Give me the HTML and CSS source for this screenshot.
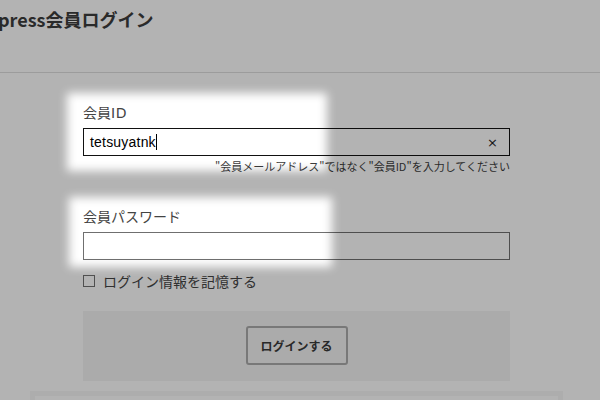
FILE: index.html
```html
<!DOCTYPE html>
<html lang="ja">
<head>
<meta charset="utf-8">
<title>会員ログイン</title>
<link rel="stylesheet" href="styles.css">
</head>
<body>
<header class="header">
  <h1 class="title">press会員ログイン</h1>
</header>
<main class="main">
  <form class="form">
    <label class="label">会員<span class="latin">ID</span></label>
    <div class="field field-focus">
      <span class="value">tetsuyatnk</span><span class="caret"></span>
      <span class="clear">×</span>
    </div>
    <p class="hint">"会員メールアドレス"ではなく"会員ID"を入力してください</p>
    <label class="label label-pass">会員パスワード</label>
    <div class="field field-pass"></div>
    <div class="remember">
      <span class="checkbox"></span>
      <span class="remember-text">ログイン情報を記憶する</span>
    </div>
    <div class="actions">
      <button type="button" class="btn">ログインする</button>
    </div>
  </form>
  <div class="bottom-box"></div>
</main>
<div class="overlay">
  <div class="spot spot-id"></div>
  <div class="spot spot-pass"></div>
</div>
</body>
</html>
```
FILE: styles.css
```css
html, body {
  margin: 0;
  padding: 0;
  background: #ffffff;
  overflow: hidden;
}
body {
  width: 600px;
  height: 400px;
  font-family: "Noto Sans CJK JP", "Liberation Sans", sans-serif;
  color: #3a3a3a;
}
.header {
  height: 72px;
  border-bottom: 1px solid #dedede;
  overflow: hidden;
}
.title {
  margin: 0 0 0 -2px;
  padding-top: 7px;
  font-size: 18px;
  line-height: 24px;
  font-weight: bold;
  color: #3b3b3b;
}
.main {
  margin-left: 30px;
  width: 533px;
  height: 327px;
  overflow: hidden;
}
.form {
  margin: 0 0 0 53px;
  width: 427px;
  padding-top: 29px;
}
.label {
  display: block;
  font-size: 14px;
  line-height: 20px;
  color: #444;
}
.latin {
  font-family: "DejaVu Sans", sans-serif;
  font-size: 14px;
  letter-spacing: 0.5px;
}
.field {
  box-sizing: border-box;
  height: 28px;
  margin-top: 5px;
  border: 1px solid #111;
  display: flex;
  align-items: center;
  padding: 0 6px;
}
.field-focus .value {
  font-family: "Liberation Sans", "Noto Sans CJK JP", sans-serif;
  font-size: 14px;
  letter-spacing: 0.2px;
  color: #000;
}
.caret {
  width: 1px;
  height: 16px;
  background: #000;
}
.clear {
  margin-left: auto;
  margin-right: 5px;
  font-family: "DejaVu Sans", sans-serif;
  font-size: 13px;
  color: #222;
}
.hint {
  margin: 3px 0 0;
  text-align: right;
  font-size: 11px;
  line-height: 14px;
  color: #3c3c3c;
}
.label-pass {
  margin-top: 33px;
}
.field-pass {
  margin-top: 6px;
  border-color: #6f6f6f;
}
.remember {
  margin-top: 11px;
  height: 20px;
  display: flex;
  align-items: center;
  gap: 8px;
}
.checkbox {
  box-sizing: border-box;
  width: 12px;
  height: 12px;
  border: 1px solid #707070;
}
.remember-text {
  font-size: 14px;
  line-height: 20px;
  color: #444;
}
.actions {
  margin-top: 20px;
  height: 70px;
  background: #f4f4f4;
  display: flex;
  justify-content: center;
  align-items: flex-start;
  padding-top: 15px;
  box-sizing: border-box;
}
.btn {
  box-sizing: border-box;
  width: 102px;
  height: 39px;
  border: 2px solid #ababab;
  border-radius: 3px;
  background: transparent;
  font-family: "Noto Sans CJK JP", sans-serif;
  font-size: 12px;
  font-weight: bold;
  color: #3a3a3a;
  padding: 0;
}
.bottom-box {
  margin-top: 10px;
  height: 60px;
  border: 5px solid #f6f6f6;
}
.overlay {
  position: fixed;
  top: 0;
  left: 0;
  width: 600px;
  height: 400px;
  background: #b3b3b3;
  mix-blend-mode: multiply;
  pointer-events: none;
  z-index: 10;
  overflow: hidden;
}
.spot {
  position: absolute;
  background: #ffffff;
  filter: blur(5px);
}
.spot-id {
  left: 67px;
  top: 93px;
  width: 260px;
  height: 78px;
}
.spot-pass {
  left: 69px;
  top: 197px;
  width: 263px;
  height: 70px;
}
```
